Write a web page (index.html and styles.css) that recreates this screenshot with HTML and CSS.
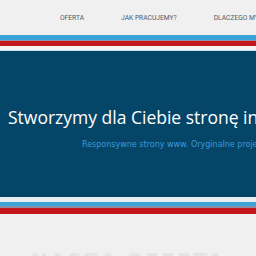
FILE: index.html
```html
<!DOCTYPE html>
<html lang="pl">
<head>
  <meta charset="UTF-8">
  <title>Strony www</title>
  <link rel="stylesheet" href="styles.css">
</head>
<body>
  <header class="top">
    <nav class="menu">
      <a href="#">Oferta</a>
      <a href="#">Jak pracujemy?</a>
      <a href="#">Dlaczego my?</a>
    </nav>
  </header>
  <div class="stripes"></div>
  <section class="hero">
    <h1>Stworzymy dla Ciebie stronę internetową</h1>
    <p>Responsywne strony www. Oryginalne projekty graficzne.</p>
  </section>
  <div class="stripes stripes-bottom"></div>
  <section class="offer">
    <h2>NASZA OFERTA</h2>
  </section>
</body>
</html>
```

FILE: styles.css
```css
body {
  margin: 0;
  background-color: #f0f0f0;
  font-family: "DejaVu Sans", sans-serif;
  overflow: hidden;
}
.top {
  height: 35px;
  background-color: #f0f0f0;
}
.menu {
  display: flex;
  gap: 37px;
  padding-left: 60px;
  padding-top: 14px;
  white-space: nowrap;
}
.menu a {
  font-family: "Roboto", sans-serif;
  font-size: 6.7px;
  text-transform: uppercase;
  text-decoration: none;
  color: #4f5a6b;
}
/* paski w kolorach pod menu i pod banerem */
.stripes {
  height: 16px;
  background: linear-gradient(#3aa3d8 0 5px, #8b8ea8 5px 6px, #c3161f 6px 11px, #f4f4f4 11px 15px, #c9e2f0 15px 16px);
}
.stripes-bottom {
  height: 17px;
  background: linear-gradient(#e9ecf0 0 5px, #3aa3d8 5px 9px, #8b8ea8 9px 11px, #c3161f 11px 17px);
}
.hero {
  background-color: #054568;
  height: 146px;
  box-sizing: border-box;
  padding-top: 54px;
  white-space: nowrap;
  overflow: hidden;
}
.hero h1 {
  margin: 0 0 0 8px;
  font-family: "Open Sans", sans-serif;
  font-weight: 400;
  font-size: 17.5px;
  color: #ffffff;
}
.hero p {
  margin: 11px 0 0 82px;
  font-size: 8px;
  color: #3a9ad9;
}
.offer {
  padding-top: 34px;
  text-align: center;
  white-space: nowrap;
}
.offer h2 {
  margin: 0;
  font-size: 20px;
  color: #e4e4e4;
  letter-spacing: 2px;
}
```
